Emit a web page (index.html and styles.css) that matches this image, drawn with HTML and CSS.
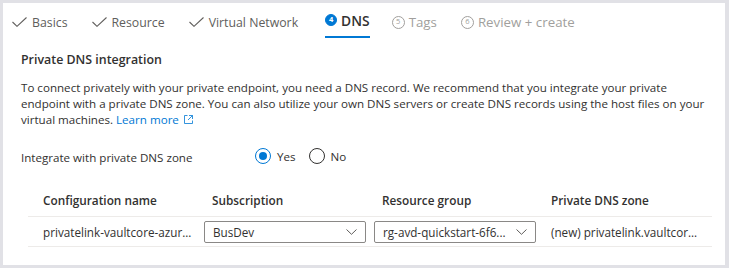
FILE: index.html
```html
<!DOCTYPE html>
<html lang="en">

<head>
    <meta charset="UTF-8">
    <meta name="viewport" content="width=device-width, initial-scale=1.0">
    <title>Create a private endpoint - DNS</title>
    <link rel="stylesheet" href="styles.css">
</head>

<body>
    <div class="frame">
        <nav class="tabs">
            <div class="tab done">
                <svg class="check" width="15" height="10" viewBox="0 0 15 10"><polyline points="0.5,5 5,9.3 14.5,0.5" /></svg>
                <span>Basics</span>
            </div>
            <div class="tab done">
                <svg class="check" width="15" height="10" viewBox="0 0 15 10"><polyline points="0.5,5 5,9.3 14.5,0.5" /></svg>
                <span>Resource</span>
            </div>
            <div class="tab done">
                <svg class="check" width="15" height="10" viewBox="0 0 15 10"><polyline points="0.5,5 5,9.3 14.5,0.5" /></svg>
                <span>Virtual Network</span>
            </div>
            <div class="tab active">
                <span class="step">4</span>
                <span>DNS</span>
            </div>
            <div class="tab disabled">
                <span class="step">5</span>
                <span>Tags</span>
            </div>
            <div class="tab disabled">
                <span class="step">6</span>
                <span>Review + create</span>
            </div>
        </nav>

        <div class="content">
            <h2>Private DNS integration</h2>
            <p class="intro">To connect privately with your private endpoint, you need a DNS record. We recommend that you integrate your private endpoint with a private DNS zone. You can also utilize your own DNS servers or create DNS records using the host files on your virtual machines. <a href="#" class="link">Learn more</a><svg class="ext" width="9" height="9" viewBox="0 0 9 9"><path d="M3.5 0.5h-3v8h8v-3M5 0.5h3.5v3.5M8.5 0.5l-4.5 4.5" /></svg></p>

            <div class="field">
                <span class="field-label">Integrate with private DNS zone</span>
                <label class="radio checked"><span class="dot"></span>Yes</label>
                <label class="radio"><span class="dot"></span>No</label>
            </div>

            <div class="grid">
                <div class="head c1">Configuration name</div>
                <div class="head c2">Subscription</div>
                <div class="head c3">Resource group</div>
                <div class="head c4">Private DNS zone</div>

                <div class="cell c1">privatelink-vaultcore-azur...</div>
                <div class="cell c2">
                    <div class="select"><span>BusDev</span><svg width="11" height="6" viewBox="0 0 11 6"><polyline points="0.5,0.5 5.5,5.3 10.5,0.5" /></svg></div>
                </div>
                <div class="cell c3">
                    <div class="select"><span>rg-avd-quickstart-6f6...</span><svg width="11" height="6" viewBox="0 0 11 6"><polyline points="0.5,0.5 5.5,5.3 10.5,0.5" /></svg></div>
                </div>
                <div class="cell c4">(new) privatelink.vaultcor...</div>
            </div>
        </div>
    </div>
</body>
</html>
```

FILE: styles.css
```css
body {
    margin: 0;
    font-family: "Open Sans", "Noto Sans", Arial, sans-serif;
    color: #323130;
    background: #e1e1e6;
}
.frame {
    box-sizing: border-box;
    width: 729px;
    height: 268px;
    border: 3px solid #e1e1e6;
    border-right-width: 4px;
    background: white;
}
.tabs {
    display: flex;
    gap: 24px;
    height: 35px;
    padding-left: 9px;
}
.tab {
    display: flex;
    align-items: center;
    gap: 5px;
    box-sizing: border-box;
    height: 35px;
    padding-top: 3px;
    font-size: 12.3px;
    color: #323130;
}
.tab.done {
    color: #605e5c;
}
.check polyline {
    fill: none;
    stroke: #605e5c;
    stroke-width: 1.1;
}
.tab.active {
    gap: 4px;
    margin-left: 3px;
    margin-right: -2px;
    border-bottom: 2px solid #0078d4;
    padding-top: 1px;
    font-size: 13.8px;
    font-weight: 600;
}
.tab.disabled {
    gap: 4px;
    font-size: 13.3px;
    color: #a19f9d;
}
.step {
    display: inline-flex;
    align-items: center;
    justify-content: center;
    box-sizing: border-box;
    width: 13px;
    height: 13px;
    border-radius: 50%;
    border: 1px solid #a19f9d;
    font-size: 7.5px;
    font-weight: 400;
    line-height: 1;
}
.tab.active .step {
    width: 12px;
    height: 12px;
    background: #0078d4;
    border-color: #0078d4;
    color: white;
    font-weight: 700;
}
.content {
    padding: 0 13px 0 18px;
}
h2 {
    margin: 12px 0 0;
    font-size: 12.4px;
    line-height: 20px;
    font-weight: 600;
}
.intro {
    margin: 10px 0 0;
    width: 686px;
    font-size: 11.6px;
    line-height: 16px;
}
.link {
    color: #0078d4;
    text-decoration: none;
}
.ext {
    margin-left: 5px;
    vertical-align: 0;
}
.ext path {
    fill: none;
    stroke: #0078d4;
    stroke-width: 0.8;
}
.field {
    display: flex;
    align-items: center;
    height: 20px;
    margin-top: 18px;
    font-size: 11.6px;
}
.field-label {
    width: 234px;
    padding-top: 3px;
}
.radio {
    display: flex;
    align-items: center;
    gap: 6px;
    margin-right: 13px;
}
.dot {
    box-sizing: border-box;
    width: 16px;
    height: 16px;
    border-radius: 50%;
    border: 1px solid #323130;
    position: relative;
}
.radio.checked .dot {
    border-color: #0078d4;
}
.radio.checked .dot::after {
    content: "";
    position: absolute;
    left: 3px;
    top: 3px;
    width: 8px;
    height: 8px;
    border-radius: 50%;
    background: #0078d4;
}
.grid {
    display: grid;
    grid-template-columns: 172px 170px 170px 1fr;
    margin: 18px 0 0 7px;
}
.head {
    display: flex;
    align-items: center;
    height: 32px;
    font-size: 11.8px;
    font-weight: 600;
}
.cell {
    display: flex;
    align-items: center;
    height: 29px;
    border-top: 1px solid #edebe9;
    border-bottom: 1px solid #edebe9;
    font-size: 11.7px;
}
.c1 {
    padding-left: 15px;
}
.head.c2, .head.c3 {
    padding-left: 12px;
}
.cell.c2, .cell.c3 {
    padding-left: 4px;
}
.c4 {
    padding-left: 11px;
}
.select {
    display: flex;
    align-items: center;
    justify-content: space-between;
    box-sizing: border-box;
    width: 162px;
    height: 22px;
    padding: 0 8px;
    border: 1px solid #8a8886;
    border-radius: 2px;
}
.select polyline {
    fill: none;
    stroke: #605e5c;
    stroke-width: 1;
}
```
